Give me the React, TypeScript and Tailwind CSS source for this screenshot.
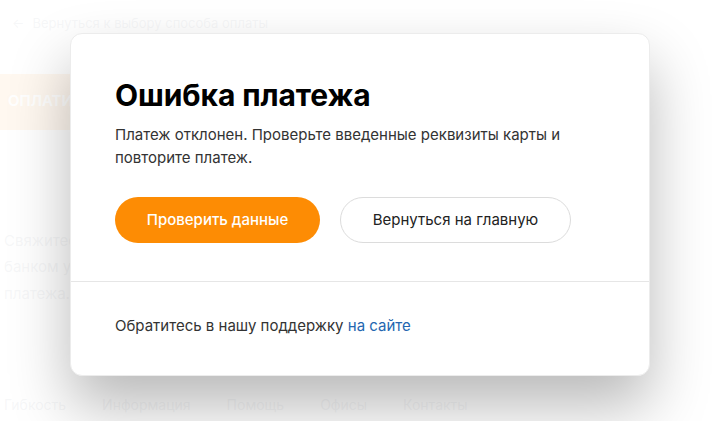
export default function App() {
  return (
    <div className="relative w-[712px] h-[421px] overflow-hidden bg-white font-['Inter',sans-serif]">
      {/* page behind the dialog */}
      <div className="flex flex-col h-full text-gray-400">
        <div className="flex items-center gap-2 pl-3 pt-[14px] text-[13px] text-gray-500">
          <span>←</span>
          <span>Вернуться к выбору способа оплаты</span>
        </div>
        <div className="mt-[40px] w-[160px] h-[56px] bg-[#ff8c00] text-white text-[15px] font-semibold flex items-center pl-2">
          ОПЛАТИТЬ
        </div>
        <div className="mt-[100px] flex flex-col gap-[4px] text-[15px] text-gray-500 pl-1 w-[300px]">
          <p className="whitespace-nowrap">Свяжитесь с вашей</p>
          <p className="whitespace-nowrap">банком указанной вами</p>
          <p className="whitespace-nowrap">платежа. Сообщите</p>
        </div>
        <div className="mt-auto mb-[6px] flex gap-[36px] text-[14px] text-gray-500 pl-1">
          <span>Гибкость</span>
          <span>Информация</span>
          <span>Помощь</span>
          <span>Офисы</span>
          <span>Контакты</span>
        </div>
      </div>

      {/* overlay */}
      <div className="absolute inset-0 bg-white/[0.94]" />

      {/* dialog */}
      <div className="absolute left-[70px] top-[33px] w-[580px] h-[343px] bg-white rounded-[12px] border border-[#ececec] shadow-[0_30px_60px_rgba(0,0,0,0.28)] flex flex-col">
        <div className="px-[44px] pt-[43px] pb-[38px]">
          <h1 className="text-[30px] font-bold text-black leading-[36px] tracking-[-0.1px]">Ошибка платежа</h1>
          <p className="mt-[10px] text-[15px] leading-[23px] text-[#333]">
            Платеж отклонен. Проверьте введенные реквизиты карты и
            <br />
            повторите платеж.
          </p>
          <div className="mt-[28px] flex gap-[20px]">
            <button className="w-[205px] h-[46px] rounded-full bg-[#fd8c04] text-white text-[15px] font-medium">
              Проверить данные
            </button>
            <button className="w-[231px] h-[46px] rounded-full border border-[#dcdcdc] bg-white text-[#222] text-[15px]">
              Вернуться на главную
            </button>
          </div>
        </div>
        <div className="border-t border-[#e6e6e6] flex-1 flex items-center px-[44px] pb-[4px]">
          <p className="text-[15px] text-[#333]">
            Обратитесь в нашу поддержку <a className="text-[#2466b0]">на сайте</a>
          </p>
        </div>
      </div>
    </div>
  );
}
